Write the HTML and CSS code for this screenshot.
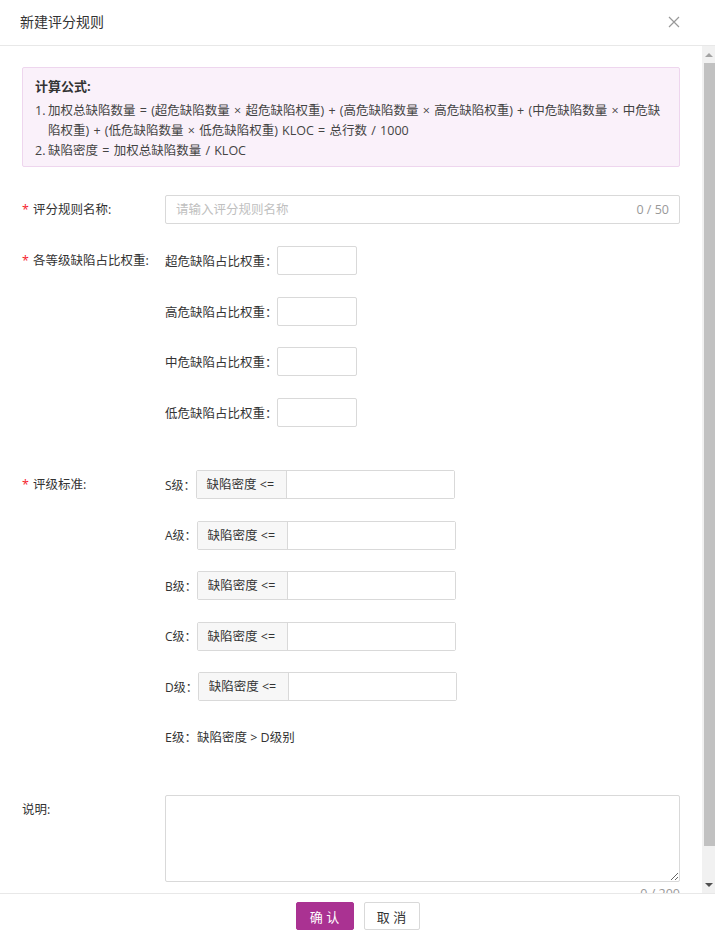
FILE: index.html
```html
<!DOCTYPE html>
<html lang="zh-CN">
<head>
<meta charset="utf-8">
<title>新建评分规则</title>
<link rel="stylesheet" href="styles.css">
</head>
<body>
<div class="modal">
  <div class="header">
    <span class="title">新建评分规则</span>
    <svg class="close" width="12" height="12" viewBox="0 0 12 12"><path d="M1 1L11 11M11 1L1 11" stroke="#999" stroke-width="1.2" fill="none"/></svg>
  </div>
  <div class="main">
    <div class="content">
      <div class="formula">
        <div class="formula-title">计算公式:</div>
        <div class="formula-line"><span class="num">1.</span><span class="ftext">加权总缺陷数量 = (超危缺陷数量 × 超危缺陷权重) + (高危缺陷数量 × 高危缺陷权重) + (中危缺陷数量 × 中危缺陷权重) + (低危缺陷数量 × 低危缺陷权重) KLOC = 总行数 / 1000</span></div>
        <div class="formula-line"><span class="num">2.</span><span class="ftext">缺陷密度 = 加权总缺陷数量 / KLOC</span></div>
      </div>

      <div class="item">
        <div class="label"><span class="req">*</span>评分规则名称:</div>
        <div class="control">
          <div class="input-wrap">
            <input class="text-input" type="text" placeholder="请输入评分规则名称">
            <span class="count">0 / 50</span>
          </div>
        </div>
      </div>

      <div class="item">
        <div class="label"><span class="req">*</span>各等级缺陷占比权重:</div>
        <div class="control">
          <div class="sub"><span class="sub-label">超危缺陷占比权重：</span><input class="weight" type="text"></div>
          <div class="sub"><span class="sub-label">高危缺陷占比权重：</span><input class="weight" type="text"></div>
          <div class="sub"><span class="sub-label">中危缺陷占比权重：</span><input class="weight" type="text"></div>
          <div class="sub"><span class="sub-label">低危缺陷占比权重：</span><input class="weight" type="text"></div>
        </div>
      </div>

      <div class="item">
        <div class="label"><span class="req">*</span>评级标准:</div>
        <div class="control">
          <div class="sub"><span class="grade-label">S级：</span><div class="group"><span class="addon">缺陷密度 &lt;=</span><input class="group-input" type="text"></div></div>
          <div class="sub"><span class="grade-label">A级：</span><div class="group"><span class="addon">缺陷密度 &lt;=</span><input class="group-input" type="text"></div></div>
          <div class="sub"><span class="grade-label">B级：</span><div class="group"><span class="addon">缺陷密度 &lt;=</span><input class="group-input" type="text"></div></div>
          <div class="sub"><span class="grade-label">C级：</span><div class="group"><span class="addon">缺陷密度 &lt;=</span><input class="group-input" type="text"></div></div>
          <div class="sub"><span class="grade-label">D级：</span><div class="group"><span class="addon">缺陷密度 &lt;=</span><input class="group-input" type="text"></div></div>
          <div class="sub"><span class="grade-text">E级：缺陷密度 &gt; D级别</span></div>
        </div>
      </div>

      <div class="item">
        <div class="label">说明:</div>
        <div class="control">
          <textarea class="textarea"></textarea>
          <div class="count-below">0 / 200</div>
        </div>
      </div>
    </div>
    <div class="scrollbar">
      <div class="sb-btn"><span class="arrow-up"></span></div>
      <div class="sb-thumb"></div>
      <div class="sb-track"></div>
      <div class="sb-btn"><span class="arrow-down"></span></div>
    </div>
  </div>
  <div class="footer">
    <button class="btn btn-primary">确 认</button>
    <button class="btn btn-default">取 消</button>
  </div>
</div>
</body>
</html>
```

FILE: styles.css
```css
* {
  box-sizing: border-box;
}

html,
body {
  margin: 0;
  padding: 0;
}

body {
  font-family: "Open Sans", "Noto Sans CJK SC", sans-serif;
  font-size: 12.5px;
  color: #333;
  background: #fff;
}

.modal {
  width: 715px;
  height: 938px;
  display: flex;
  flex-direction: column;
  overflow: hidden;
}

.header {
  flex: none;
  height: 46px;
  border-bottom: 1px solid #e8e8e8;
  display: flex;
  align-items: center;
  justify-content: space-between;
  padding: 0 35px 2px 20px;
}

.title {
  font-size: 14px;
  line-height: 20px;
  color: #333;
}

.close {
  display: block;
}

.main {
  flex: 1;
  min-height: 0;
  display: flex;
}

.content {
  flex: 1;
  min-width: 0;
  overflow: hidden;
  padding: 21px 22px 0 22px;
}

.formula {
  background: #faf1fa;
  border: 1px solid #eed6ee;
  border-radius: 2px;
  padding: 8px 12px 5px 12px;
  margin-bottom: 28px;
  color: #444;
}

.formula-title {
  font-size: 13px;
  font-weight: bold;
  line-height: 20px;
  color: #333;
  margin-bottom: 5px;
}

.formula-line {
  display: flex;
  line-height: 20px;
}

.num {
  flex: none;
  width: 13px;
}

.ftext {
  flex: 1;
  word-spacing: 1px;
}

.item {
  display: flex;
  margin-bottom: 22px;
}

.label {
  flex: none;
  width: 143px;
  line-height: 29px;
  color: #333;
  white-space: nowrap;
}

.req {
  color: #f5222d;
  margin-right: 4px;
}

.control {
  flex: 1;
  min-width: 0;
}

.input-wrap {
  display: flex;
  align-items: center;
  height: 29px;
  border: 1px solid #d9d9d9;
  border-radius: 2px;
  padding: 0 10px;
}

.text-input {
  flex: 1;
  min-width: 0;
  border: none;
  outline: none;
  padding: 0;
  font: inherit;
  color: #333;
  background: transparent;
}

.text-input::placeholder {
  color: #c0c0c0;
}

.count {
  color: #999;
  margin-left: 8px;
}

.sub {
  display: flex;
  align-items: center;
  height: 29px;
  margin-bottom: 21.5px;
}

.sub-label {
  width: 112px;
  flex: none;
  white-space: nowrap;
}

.weight {
  width: 80px;
  height: 29px;
  border: 1px solid #d9d9d9;
  border-radius: 2px;
  padding: 0 8px;
  font: inherit;
  outline: none;
}

.grade-label {
  flex: none;
  font-size: 12px;
  white-space: nowrap;
}

.group {
  display: flex;
  width: 259px;
  height: 29px;
  border: 1px solid #d9d9d9;
  border-radius: 2px;
}

.addon {
  flex: none;
  width: 90px;
  background: #f7f7f7;
  border-right: 1px solid #d9d9d9;
  padding-left: 10px;
  line-height: 27px;
  color: #333;
  white-space: nowrap;
}

.group-input {
  flex: 1;
  min-width: 0;
  border: none;
  outline: none;
  padding: 0 8px;
  font: inherit;
  background: #fff;
}

.grade-text {
  line-height: 29px;
  white-space: nowrap;
}

.textarea {
  display: block;
  width: 100%;
  height: 87px;
  border: 1px solid #d9d9d9;
  border-radius: 2px;
  padding: 5px 10px;
  font: inherit;
  resize: vertical;
  outline: none;
}

.count-below {
  text-align: right;
  color: #999;
  line-height: 20px;
  padding-top: 2px;
}

.scrollbar {
  flex: none;
  width: 13px;
  background: #f1f1f1;
  display: flex;
  flex-direction: column;
}

.sb-btn {
  flex: none;
  height: 17px;
  display: flex;
  align-items: center;
  justify-content: center;
}

.arrow-up {
  width: 0;
  height: 0;
  border-left: 4px solid transparent;
  border-right: 4px solid transparent;
  border-bottom: 4px solid #a3a3a3;
}

.arrow-down {
  width: 0;
  height: 0;
  border-left: 4px solid transparent;
  border-right: 4px solid transparent;
  border-top: 4px solid #505050;
}

.sb-thumb {
  flex: none;
  height: 783px;
  margin-left: 2px;
  background: #c1c1c1;
}

.sb-track {
  flex: 1;
}

.footer {
  flex: none;
  height: 45px;
  border-top: 1px solid #e8e8e8;
  display: flex;
  align-items: center;
  justify-content: center;
  gap: 10px;
}

.btn {
  height: 28px;
  border-radius: 2px;
  font-family: "Open Sans", "Noto Sans CJK SC", sans-serif;
  font-size: 13px;
  padding: 0;
  cursor: pointer;
}

.btn-primary {
  width: 58px;
  background: #aa3292;
  border: 1px solid #aa3292;
  color: #fff;
}

.btn-default {
  width: 56px;
  background: #fff;
  border: 1px solid #d9d9d9;
  color: #333;
}
```
